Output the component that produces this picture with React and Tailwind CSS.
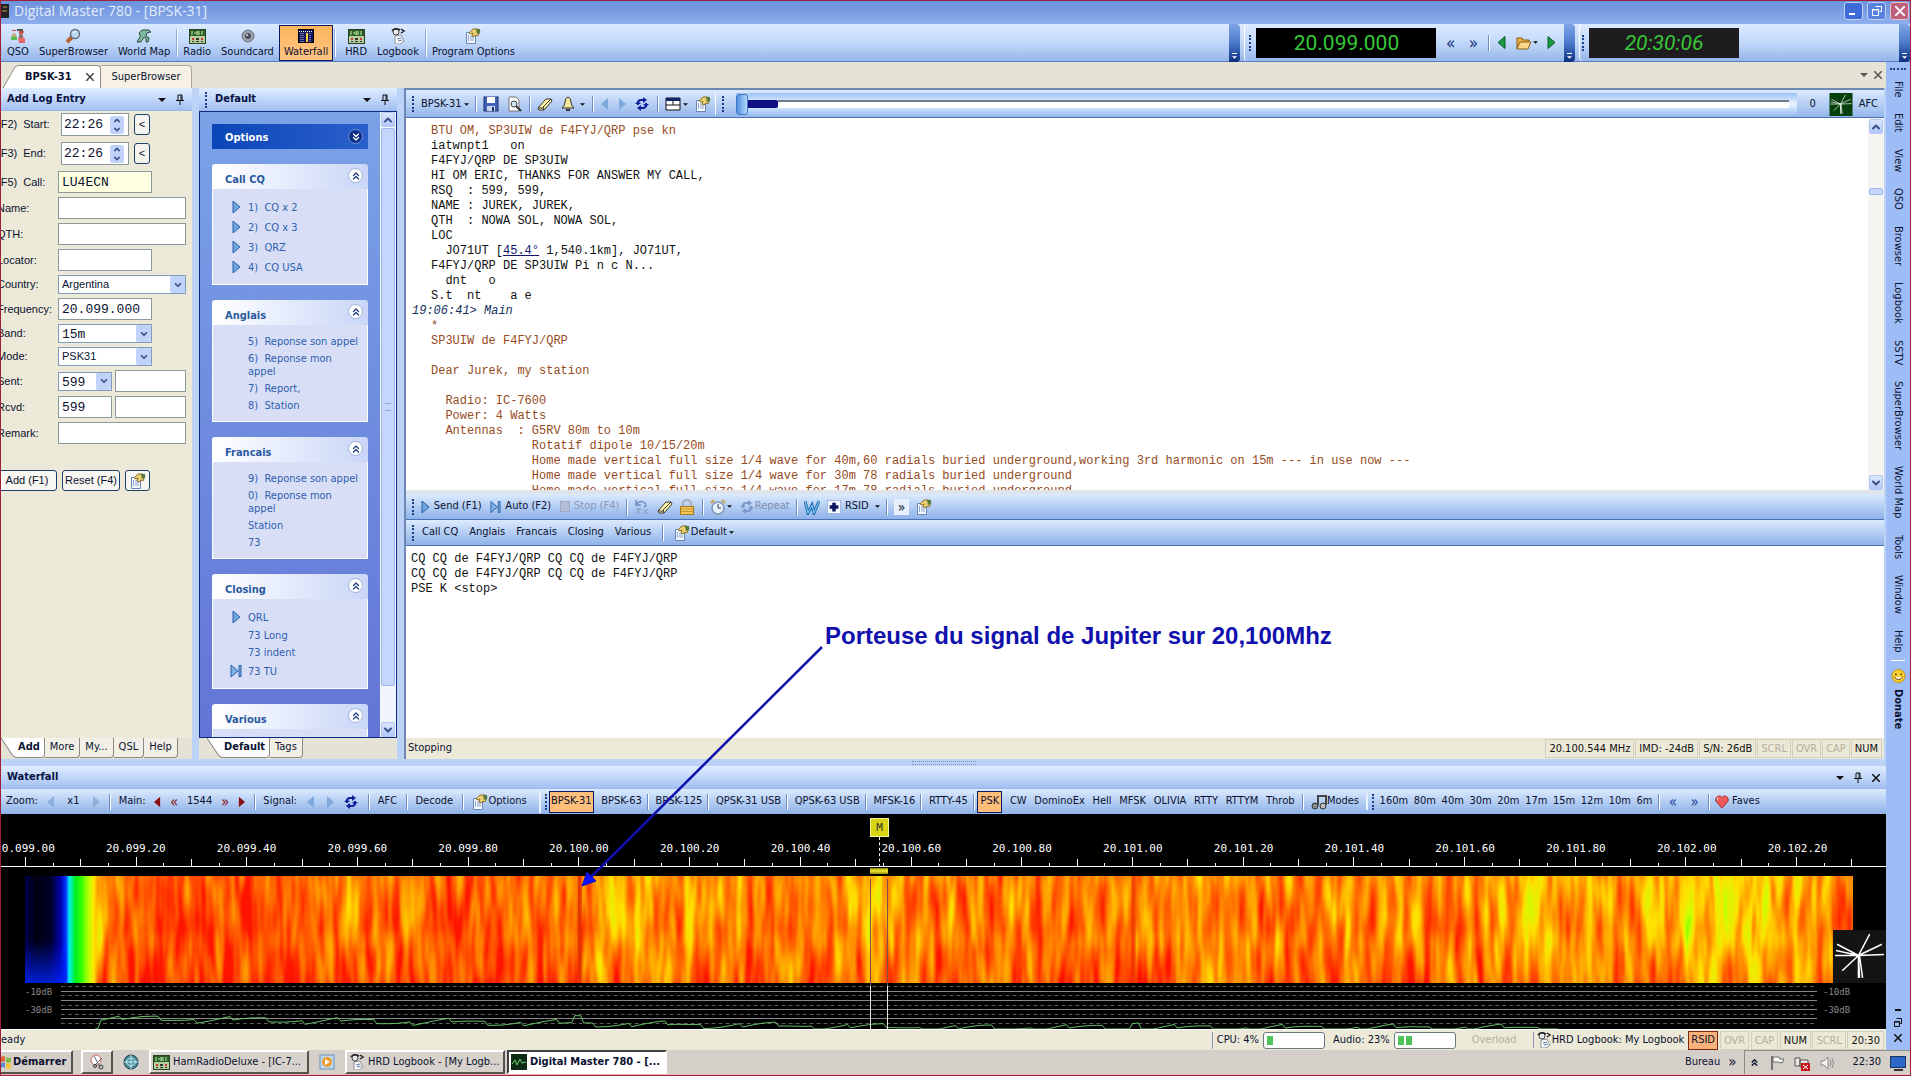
import { ChevronDown, ChevronUp, ChevronsDown, ChevronsUp } from "lucide-react";

const logLines = [
  { text: "BTU OM, SP3UIW de F4FYJ/QRP pse kn", sent: true },
  { text: "iatwnpt1   on" },
  { text: "F4FYJ/QRP DE SP3UIW" },
  { text: "HI OM ERIC, THANKS FOR ANSWER MY CALL," },
  { text: "RSQ  : 599, 599," },
  { text: "NAME : JUREK, JUREK," },
  { text: "QTH  : NOWA SOL, NOWA SOL," },
  { text: "LOC" },
  { text: "  JO71UT [", link: "45.4°", rest: " 1,540.1km], JO71UT," },
  { text: "F4FYJ/QRP DE SP3UIW Pi n c N..." },
  { text: "  dnt   o" },
  { text: "S.t  nt    a e" },
  { text: "19:06:41> Main", stamp: true },
  { text: "*", sent: true },
  { text: "SP3UIW de F4FYJ/QRP", sent: true },
  { text: " ", sent: true },
  { text: "Dear Jurek, my station", sent: true },
  { text: " ", sent: true },
  { text: "  Radio: IC-7600", sent: true },
  { text: "  Power: 4 Watts", sent: true },
  { text: "  Antennas  : G5RV 80m to 10m", sent: true },
  { text: "              Rotatif dipole 10/15/20m", sent: true },
  {
    text: "              Home made vertical full size 1/4 wave for 40m,60 radials buried underground,working 3rd harmonic on 15m --- in use now ---",
    sent: true,
  },
  {
    text: "              Home made vertical full size 1/4 wave for 30m 78 radials buried underground",
    sent: true,
  },
  {
    text: "              Home made vertical full size 1/4 wave for 17m 78 radials buried underground",
    sent: true,
  },
];

const macroGroups = [
  {
    title: "Call CQ",
    items: [
      { text: "1)  CQ x 2", icon: "play" },
      { text: "2)  CQ x 3", icon: "play" },
      { text: "3)  QRZ", icon: "play" },
      { text: "4)  CQ USA", icon: "play" },
    ],
  },
  {
    title: "Anglais",
    items: [
      { text: "5)  Reponse son appel" },
      { text: "6)  Reponse mon\nappel" },
      { text: "7)  Report," },
      { text: "8)  Station" },
    ],
  },
  {
    title: "Francais",
    items: [
      { text: "9)  Reponse son appel" },
      { text: "0)  Reponse mon\nappel" },
      { text: "Station" },
      { text: "73" },
    ],
  },
  {
    title: "Closing",
    items: [
      { text: "QRL", icon: "play" },
      { text: "73 Long" },
      { text: "73 indent" },
      { text: "73 TU", icon: "skip" },
    ],
  },
  { title: "Various", items: [] },
];

const menus = [
  "File", "Edit", "View", "QSO", "Browser", "Logbook", "SSTV",
  "SuperBrowser", "World Map", "Tools", "Window", "Help",
];

const bands = ["160m", "80m", "40m", "30m", "20m", "17m", "15m", "12m", "10m", "6m"];

const rulerLabels = [
  "20.099.00", "20.099.20", "20.099.40", "20.099.60", "20.099.80", "20.100.00",
  "20.100.20", "20.100.40", "20.100.60", "20.100.80", "20.101.00", "20.101.20",
  "20.101.40", "20.101.60", "20.101.80", "20.102.00", "20.102.20",
];

// signal level across the band, 0 = nothing, 1 = strong
const levels = [
  [0, 0.06], [0.03, 0.5], [0.036, 0.68], [0.042, 0.85], [0.06, 0.9], [0.1, 0.94],
  [0.15, 0.89], [0.19, 0.86], [0.22, 0.88], [0.25, 0.92], [0.3, 0.86],
  [0.33, 0.79], [0.36, 0.83], [0.42, 0.87], [0.46, 0.8], [0.52, 0.87],
  [0.6, 0.86], [0.66, 0.81], [0.7, 0.87], [0.75, 0.83], [0.79, 0.86],
  [0.83, 0.75], [0.87, 0.84], [0.93, 0.72], [0.97, 0.79], [1, 0.85],
];

function Svg({ className = "h-4 w-4", box = "0 0 16 16", children }) {
  return (
    <svg className={`shrink-0 ${className}`} viewBox={box} fill="none" aria-hidden="true">
      {children}
    </svg>
  );
}

function Tri({ dir = "right", fill = "#5d93cf", stroke = "none", className = "h-3 w-2" }) {
  return (
    <Svg className={className} box="0 0 8 12">
      <path d={dir === "right" ? "M1 0l7 6-7 6z" : "M7 0L0 6l7 6z"} fill={fill} stroke={stroke} />
    </Svg>
  );
}

function Caret({ className = "h-1 w-2" }) {
  return (
    <Svg className={className} box="0 0 8 4">
      <path d="M0 0h8L4 4z" fill="#111" />
    </Svg>
  );
}

function Pin() {
  return (
    <Svg className="h-3 w-3" box="0 0 12 12">
      <path d="M4 1v5M4 1h4M7 1v5M8 1v5M2 6.500h8M6 7v4" stroke="#111" />
    </Svg>
  );
}

function Cross({ color = "#111", className = "h-2 w-2" }) {
  return (
    <Svg className={className} box="0 0 8 8">
      <path d="M0 0l8 8M8 0L0 8" stroke={color} strokeWidth="1.500" />
    </Svg>
  );
}

function Skip({ className = "h-3 w-3" }) {
  return (
    <Svg className={className} box="0 0 12 12">
      <path d="M1 0l7 6-7 6zM9 0h2v12H9z" fill="#7db2e8" stroke="#2a5fa5" />
    </Svg>
  );
}

function OptionsIcon() {
  return (
    <Svg>
      <path d="M1.500 4.500h6l3 3v8h-9z" fill="#f4f8ff" stroke="#6a86b4" />
      <path d="M3 8h1M3 10h1M3 12h1" stroke="#2a56c0" />
      <path d="M5 8h3M5 10h4M5 12h4" stroke="#8aa4cc" />
      <path d="M4 5l4-4h5l2 2-2 5-2-1-2 2-2-1 1-3-2 1z" fill="#ecd070" stroke="#8a7030" />
      <path d="M11 1h4v4l-3 1z" fill="#5a7a3c" />
    </Svg>
  );
}

function RefreshIcon({ color = "#10209c" }) {
  return (
    <Svg>
      <path d="M4 9V7q0-3 3-3h2M12 7v2q0 3-3 3H7" stroke={color} strokeWidth="2" />
      <path d="M9 1l4 3-4 3z" fill={color} />
      <path d="M7 9l-4 3 4 3z" fill={color} />
      <path d="M1 8h6L4 5zM9 8h6l-3 3z" fill={color} />
    </Svg>
  );
}

function EraserIcon() {
  return (
    <Svg>
      <path d="M1 12L9 3h5l1 2-8 9H2z" fill="#fff6a8" stroke="#333" />
      <path d="M7 14l-1-3 8-8M1 12h5" stroke="#333" />
    </Svg>
  );
}

function RadioIcon() {
  return (
    <Svg className="h-[15px] w-[17px]" box="0 0 17 15">
      <rect x="0.500" y="0.500" width="16" height="14" fill="#b8d0a0" stroke="#27421f" />
      <rect x="1" y="1" width="15" height="6" fill="#2b5e2a" />
      <path d="M3 2v4M5 4h2M8 2v4M8 3h3M8 5h3M13 2v4" stroke="#c7f0a0" />
      <path d="M3 9h2v2H3zM12 9h2v2h-2z" fill="#c33" />
      <path d="M7 9h3v2H7zM3 12h2v1H3zM7 12h3v1H7zM12 12h2v1h-2z" fill="#333" />
    </Svg>
  );
}

function BookIcon() {
  return (
    <Svg>
      <path d="M5 8l6-1 3 6-4 3H5z" fill="#fafafa" stroke="#8a8f98" />
      <path d="M7 11l4-1M8 13l4-1" stroke="#5877a8" />
      <circle cx="6" cy="4" r="3" fill="#e8eaee" stroke="#444" />
      <path d="M2 3q3-4 8-1M11 1l3 2-3 2" stroke="#222" strokeWidth="1.500" />
    </Svg>
  );
}

function ScopeIcon({ className, fill }) {
  return (
    <Svg className={className} box="0 0 52 52">
      <rect width="52" height="52" fill={fill} />
      <path
        d="M25 25L36 4M25 25L48 14M25 25l25-1M25 25L4 14M25 25L3 20M25 25L2 25M25 25L9 40M25 25v22M26 25l3 22M25 25l1 22"
        stroke="#fff"
        strokeWidth="1.500"
      />
    </Svg>
  );
}

function Grip({ vertical = true }) {
  return (
    <span
      className={
        vertical
          ? "h-4 w-0 shrink-0 border-l-2 border-dotted border-[#1c3f8c]"
          : "h-0 w-4 border-t-2 border-dotted border-[#1c3f8c]"
      }
    />
  );
}

function Sep() {
  return <span className="h-4 w-px shrink-0 bg-[#6a8ccb] shadow-[1px_0_0_#fff]" />;
}

function TallSep() {
  return <span className="mx-px h-7 w-px shrink-0 bg-[#8aa9dc] shadow-[1px_0_0_#fff]" />;
}

function BigButton({ label, active, children }) {
  return (
    <button
      className={`flex h-9 flex-col items-center justify-center gap-px border px-1 pt-[2px] ${
        active
          ? "border-[#0a1a66] bg-linear-to-b from-[#fcb45e] to-[#ffc583]"
          : "border-transparent"
      }`}
    >
      {children}
      <span className="leading-[14px]">{label}</span>
    </button>
  );
}

function DockHeader({ title, grip, close }) {
  return (
    <div className="flex h-[23px] shrink-0 items-center gap-2 border-b border-[#9db8e8] bg-linear-to-b from-[#e0edff] to-[#a3c0f2] px-[6px] pt-px">
      {grip && <Grip />}
      <h2 className="flex-1 font-bold text-[#06123f]">{title}</h2>
      <button aria-label="Menu">
        <Caret />
      </button>
      <button aria-label="Pin">
        <Pin />
      </button>
      {close && (
        <button aria-label="Close">
          <Cross />
        </button>
      )}
    </div>
  );
}

function ScrollButton({ up }) {
  const Icon = up ? ChevronUp : ChevronDown;
  return (
    <button
      aria-label={up ? "Scroll up" : "Scroll down"}
      className="flex h-[15px] w-[14px] items-center justify-center rounded-[2px] border border-[#b4c8f6] bg-linear-to-b from-[#dbe6ff] to-[#b3c9fa]"
    >
      <Icon className="h-3 w-3 text-[#3a5187]" strokeWidth={4} />
    </button>
  );
}

function TextField({ id, label, value = "", wide, yellow }) {
  return (
    <div className="flex items-center">
      <FormLabel id={id} label={label} />
      <input
        id={id}
        defaultValue={value}
        className={`h-[22px] border border-[#8a9a9a] px-[3px] font-['Liberation_Mono',monospace] text-[13px] ${
          wide ? "w-32" : "w-[94px]"
        } ${yellow ? "bg-[#ffffe1]" : "bg-white"}`}
      />
    </div>
  );
}

function FormLabel({ id, label }) {
  return (
    <label htmlFor={id} className="w-[61px] shrink-0 whitespace-pre">
      {label}
    </label>
  );
}

function SelectBox({ id, value, width, mono }) {
  return (
    <div className={`relative ${width}`}>
      <select
        id={id}
        defaultValue={value}
        className={`block h-[19px] w-full appearance-none border border-[#7f9db9] bg-white px-[3px] ${
          mono ? "font-['Liberation_Mono',monospace] text-[13px]" : ""
        }`}
      >
        <option>{value}</option>
      </select>
      <span className="pointer-events-none absolute top-px right-px flex h-[17px] w-[15px] items-center justify-center rounded-[2px] bg-[#c1d3fb]">
        <ChevronDown className="h-[10px] w-[10px] text-[#3a5187]" strokeWidth={4} />
      </span>
    </div>
  );
}

function TimeField({ id, label }) {
  return (
    <div className="flex items-center pb-[2px]">
      <FormLabel id={id} label={label} />
      <div className="ml-[3px] flex h-[23px] w-[68px] items-center border border-[#8a9a9a] bg-white">
        <input
          id={id}
          defaultValue="22:26"
          className="w-12 pl-[2px] font-['Liberation_Mono',monospace] text-[13px]"
        />
        <span className="flex flex-col rounded-[2px] bg-[#c1d3fb]">
          <button aria-label={`${label} up`} className="px-[2px]">
            <ChevronUp className="h-[9px] w-[10px] text-[#3a5187]" strokeWidth={4} />
          </button>
          <button aria-label={`${label} down`} className="px-[2px]">
            <ChevronDown className="h-[9px] w-[10px] text-[#3a5187]" strokeWidth={4} />
          </button>
        </span>
      </div>
      <button className="ml-[5px] h-[21px] w-4 rounded-[3px] border border-[#1c3f6c] bg-[#f4f3ee]">
        &lt;
      </button>
    </div>
  );
}

function BottomTabs({ tabs }) {
  return (
    <div className="flex h-[21px] shrink-0 bg-[#e5e2d6]">
      <Svg className="h-5 w-4" box="0 0 16 20">
        <path d="M0 0h16v20H14z" fill="#fff" />
        <path d="M0 0l12 18q2 1.500 4 1.500" stroke="#777" />
      </Svg>
      {tabs.map((tab, i) => (
        <button
          key={tab}
          className={`h-5 rounded-br-sm border-r border-b border-[#8b8b84] ${
            i === 0 ? "bg-white pr-1 pl-px font-bold" : "bg-[#f1efe6] px-[5px]"
          }`}
        >
          {tab}
        </button>
      ))}
    </div>
  );
}

function LogEntryDock() {
  return (
    <section className="flex w-[191px] shrink-0 flex-col bg-[#ece9d8]">
      <DockHeader title="Add Log Entry" />
      <form
        className="-ml-1 flex flex-1 flex-col gap-1 pt-[2px] font-['Liberation_Sans',sans-serif] text-[11px]"
        onSubmit={(e) => e.preventDefault()}
      >
        <TimeField id="start" label="(F2)  Start:" />
        <TimeField id="end" label="(F3)  End:" />
        <TextField id="call" label="(F5)  Call:" value="LU4ECN" yellow />
        <TextField id="name" label="Name:" wide />
        <TextField id="qth" label="QTH:" wide />
        <TextField id="locator" label="Locator:" />
        <div className="flex items-center">
          <FormLabel id="country" label="Country:" />
          <SelectBox id="country" value="Argentina" width="w-32" />
        </div>
        <TextField id="frequency" label="Frequency:" value="20.099.000" />
        <div className="flex items-center">
          <FormLabel id="band" label="Band:" />
          <SelectBox id="band" value="15m" width="w-[94px]" mono />
        </div>
        <div className="flex items-center">
          <FormLabel id="mode" label="Mode:" />
          <SelectBox id="mode" value="PSK31" width="w-[94px]" />
        </div>
        <div className="flex items-center">
          <FormLabel id="sent" label="Sent:" />
          <SelectBox id="sent" value="599" width="w-[54px]" mono />
          <input aria-label="Sent exchange" className="ml-[3px] h-[22px] w-[71px] border border-[#8a9a9a] bg-white" />
        </div>
        <div className="flex items-center">
          <FormLabel id="rcvd" label="Rcvd:" />
          <input
            id="rcvd"
            defaultValue="599"
            className="h-[22px] w-[54px] border border-[#8a9a9a] bg-white px-[3px] font-['Liberation_Mono',monospace] text-[13px]"
          />
          <input aria-label="Received exchange" className="ml-[3px] h-[22px] w-[71px] border border-[#8a9a9a] bg-white" />
        </div>
        <TextField id="remark" label="Remark:" wide />
        <div className="mt-[22px] flex gap-[5px]">
          <button className="h-[21px] w-[60px] rounded-[3px] border border-[#1c3f6c] bg-[#f7f6f1]">Add (F1)</button>
          <button className="h-[21px] w-[58px] rounded-[3px] border border-[#1c3f6c] bg-[#f7f6f1]">Reset (F4)</button>
          <button
            aria-label="Log options"
            className="flex h-[21px] w-[25px] items-center justify-center rounded-[3px] border border-[#1c3f6c] bg-[#f7f6f1]"
          >
            <OptionsIcon />
          </button>
        </div>
      </form>
      <BottomTabs tabs={["Add", "More", "My...", "QSL", "Help"]} />
    </section>
  );
}

function MacroPanel({ group }) {
  return (
    <div>
      <button className="flex h-[25px] w-full items-start justify-between rounded-t-[3px] bg-linear-to-r from-white to-[#c9d6f7] pt-1 pr-[5px] pl-[13px]">
        <span className="pt-1 font-bold text-[#2a5a9e]">{group.title}</span>
        <span className="flex h-[15px] w-[15px] items-center justify-center rounded-full border border-[#9fb2d8] bg-white">
          <ChevronsUp className="h-3 w-3 text-[#1f3f7f]" strokeWidth={2.5} />
        </span>
      </button>
      <ul className="border border-t-0 border-white bg-[#d8def6] pt-2 pb-[7px] text-[#2f5fae]">
        {group.items.map((item) => (
          <li key={item.text} className={`flex items-center ${item.icon ? "h-5" : "py-[2px]"}`}>
            <span className="flex w-[35px] justify-center pl-[10px]">
              {item.icon === "play" && <Tri fill="#6ea6e0" stroke="#2a5fa5" />}
              {item.icon === "skip" && <Skip />}
            </span>
            <button className="text-left leading-[13px] whitespace-pre">{item.text}</button>
          </li>
        ))}
      </ul>
    </div>
  );
}

function MacroDock() {
  return (
    <section className="flex min-h-0 w-[198px] shrink-0 flex-col">
      <DockHeader title="Default" grip />
      <div className="flex min-h-0 flex-1 border border-[#0c2c84]">
        <div className="flex flex-1 flex-col gap-[15px] overflow-hidden bg-linear-to-b from-[#7ba2e7] to-[#6375d6] px-3 pt-3">
          <button className="flex h-[25px] shrink-0 items-center justify-between bg-linear-to-r from-[#0a46b8] to-[#2a5fcb] pr-[5px] pl-[13px]">
            <span className="pt-1 font-bold text-white">Options</span>
            <span className="flex h-[15px] w-[15px] items-center justify-center rounded-full border border-[#6f93dd] bg-[#0b2f86]">
              <ChevronsDown className="h-3 w-3 text-white" strokeWidth={2.5} />
            </span>
          </button>
          {macroGroups.map((group) => (
            <MacroPanel key={group.title} group={group} />
          ))}
        </div>
        <div className="flex w-4 flex-col items-center bg-[#f3f5fd]">
          <ScrollButton up />
          <div className="mt-px flex w-[14px] flex-1 flex-col items-center justify-center rounded-[2px] border border-[#9db7ee] bg-[#c5d6fc]">
            <span className="h-2 w-[6px] border-y border-[#8fa9e0]" />
          </div>
          <div className="h-9" />
          <ScrollButton />
        </div>
      </div>
      <div className="bg-[#e5e2d6] pl-2">
        <BottomTabs tabs={["Default", "Tags"]} />
      </div>
    </section>
  );
}

function LogToolbar() {
  return (
    <div className="flex h-7 shrink-0 items-center border-b border-[#4a71b5] bg-linear-to-b from-[#dceafe] to-[#94b6ea] pt-px">
      <div className="flex w-[309px] shrink-0 items-center justify-between pr-1 pl-[6px]">
        <Grip />
        <button className="flex items-center gap-[2px]">
          BPSK-31 <Caret className="h-[3px] w-[5px]" />
        </button>
        <Sep />
        <button aria-label="Save">
          <Svg>
            <rect x="1" y="1" width="14" height="14" fill="#3f63b8" stroke="#1e2f6c" />
            <path d="M4 1h8v6H4z" fill="#fff" />
            <path d="M4 10h8v5H4z" fill="#c9d4ea" />
            <path d="M9 11h2v4H9z" fill="#1e2f6c" />
          </Svg>
        </button>
        <button aria-label="Preview">
          <Svg>
            <path d="M3 1h7l3 3v11H3z" fill="#fff" stroke="#777" />
            <circle cx="8" cy="8" r="3" fill="#cfe6f6" stroke="#444" />
            <path d="M10 10l5 5" stroke="#333" strokeWidth="2" />
          </Svg>
        </button>
        <Sep />
        <button aria-label="Clear">
          <EraserIcon />
        </button>
        <button aria-label="Alarm" className="flex items-center gap-1">
          <Svg>
            <path d="M2 12q3-2 3-6 0-4 3-5 3 1 3 5 0 4 3 6z" fill="#f6e79a" stroke="#333" />
            <path d="M6 14h4" stroke="#333" strokeWidth="2" />
          </Svg>
          <Caret className="h-[3px] w-[5px]" />
        </button>
        <Sep />
        <button aria-label="Previous">
          <Tri dir="left" fill="#7fa9dc" className="h-3 w-[10px]" />
        </button>
        <button aria-label="Next">
          <Tri fill="#7fa9dc" className="h-3 w-[10px]" />
        </button>
        <button aria-label="Refresh">
          <RefreshIcon />
        </button>
        <Sep />
        <button aria-label="Layout" className="flex items-center gap-[2px]">
          <Svg>
            <path d="M1 2h14v12H1z" fill="#fff" stroke="#111" />
            <path d="M1 2h14v3H1z" fill="#13206b" />
            <path d="M1 9h14M8 5v4" stroke="#111" />
          </Svg>
          <Caret className="h-[3px] w-[5px]" />
        </button>
        <button aria-label="Display options">
          <OptionsIcon />
        </button>
      </div>
      <div className="flex flex-1 items-center gap-3 border-l border-white pl-[6px]">
        <Grip />
        <div className="flex h-[22px] flex-1 items-center bg-linear-to-b from-[#9cc2f5] via-[#eaf3ff] to-[#9cc2f5] pr-2">
          <span className="h-[21px] w-3 rounded-[3px] border border-[#3d78c4] bg-linear-to-r from-[#4a8fe0] to-[#b5d6fb]" />
          <span className="h-2 w-[30px] rounded-r-[2px] bg-[#120f86]" />
          <span className="h-2 flex-1 border-t-2 border-[#6f7c8c] bg-white" />
        </div>
      </div>
      <span className="w-8 text-center">0</span>
      <ScopeIcon className="h-[23px] w-6" fill="#07400d" />
      <button className="px-[6px]">AFC</button>
    </div>
  );
}

function ReceivePane() {
  return (
    <div className="flex min-h-0 flex-1 bg-white">
      <div className="flex-1 overflow-hidden pt-[6px] pl-[6px] font-['Liberation_Mono',monospace] text-[12px] leading-[15px]">
        {logLines.map((line, i) => (
          <p
            key={i}
            className={`whitespace-pre ${
              line.stamp
                ? "text-[#12305c] italic"
                : line.sent
                  ? "pl-[19px] text-[#964b1e]"
                  : "pl-[19px] text-[#111]"
            }`}
          >
            {line.text}
            {line.link && (
              <a href="#bearing" className="text-[#10106c] underline">
                {line.link}
              </a>
            )}
            {line.rest}
          </p>
        ))}
      </div>
      <div className="flex w-4 flex-col items-center bg-[#f5f4f0] pt-px">
        <ScrollButton up />
        <div className="flex-[54]" />
        <div className="h-[7px] w-[14px] rounded-[2px] border border-[#9db7ee] bg-[#c5d6fc]" />
        <div className="flex-[280]" />
        <ScrollButton />
      </div>
    </div>
  );
}

function SendToolbars() {
  return (
    <div className="shrink-0 border-t-4 border-[#dfe3ea]">
      <div className="flex h-[26px] items-center border-b border-[#4a71b5] bg-linear-to-b from-[#dceafe] to-[#8eb2e8]">
        <div className="flex w-[526px] items-center justify-between pl-[6px]">
          <Grip />
          <button className="flex items-center gap-[5px]">
            <Tri fill="#6ea6e0" stroke="#2a5fa5" /> Send (F1)
          </button>
          <button className="flex items-center gap-1 pl-[2px]">
            <Skip className="h-3 w-[11px]" /> Auto (F2)
          </button>
          <button className="flex items-center gap-1 pl-[2px] text-[#8c9ab5]">
            <span className="h-[11px] w-[10px] border border-[#9ea9c6] bg-[#b6bfd8]" /> Stop (F4)
          </button>
          <Sep />
          <button aria-label="Undo transmit">
            <Svg>
              <path d="M2 1v5h5M2 6q4-6 9-2 2 3-1 4" stroke="#6d8fc6" strokeWidth="1.500" />
              <path d="M2 10h5M4.500 10v5M9 10l5 5M14 10l-5 5" stroke="#7f93b8" />
            </Svg>
          </button>
          <button aria-label="Clear text">
            <EraserIcon />
          </button>
          <button aria-label="Lock">
            <Svg>
              <path d="M4 8V5q0-4 4-4t4 4v3" stroke="#a9aeb8" strokeWidth="2" />
              <rect x="1.500" y="7.500" width="13" height="8" fill="#f3c75a" stroke="#a87a1c" />
              <path d="M2 10h12M2 12.500h12" stroke="#c9962c" />
            </Svg>
          </button>
          <Sep />
          <button aria-label="Timer" className="flex items-center gap-px">
            <Svg>
              <circle cx="8" cy="9" r="6" fill="#e8f0fa" stroke="#7d93b5" strokeWidth="1.500" />
              <path d="M8 5v4h3" stroke="#345" />
              <path d="M1 4l3-3M15 4l-3-3" stroke="#c8a24a" strokeWidth="2" />
            </Svg>
            <Caret className="h-[3px] w-[5px]" />
          </button>
          <button className="flex items-center text-[#7f8fb0]">
            <RefreshIcon color="#7a98c8" /> Repeat
          </button>
          <Sep />
          <button aria-label="Word list">
            <Svg>
              <path d="M1 2l3 12 4-8 2 8 5-12" stroke="#1f6fb5" strokeWidth="3" />
              <path d="M1 2l3 12 4-8 2 8 5-12" stroke="#8fd0ef" />
            </Svg>
          </button>
          <button className="flex items-center gap-1">
            <Svg className="h-[14px] w-[14px]">
              <rect x="0.500" y="0.500" width="15" height="15" fill="#f5f8ff" stroke="#9fb4dd" />
              <path d="M8 3v10M3 8h10" stroke="#0b1560" strokeWidth="4" />
            </Svg>
            RSID
            <Caret className="ml-[2px] h-[3px] w-[5px]" />
          </button>
          <Sep />
          <button className="w-[15px] bg-[#e8f0fd] text-[14px] leading-4">»</button>
          <button aria-label="Send options">
            <OptionsIcon />
          </button>
        </div>
      </div>
      <div className="flex h-[26px] items-center border-b border-[#4a71b5] bg-linear-to-b from-[#dceafe] to-[#8eb2e8]">
        <div className="flex w-[328px] items-center justify-between pl-[6px]">
          <span className="flex items-center gap-2">
            <Grip />
            <button>Call CQ</button>
          </span>
          {["Anglais", "Francais", "Closing", "Various"].map((name) => (
            <button key={name}>{name}</button>
          ))}
          <Sep />
          <button className="flex items-center gap-px">
            <OptionsIcon /> Default <Caret className="ml-px h-[3px] w-[5px]" />
          </button>
        </div>
      </div>
    </div>
  );
}

function StatusCell({ children, dim }) {
  return (
    <span className={`border border-[#d3cfbd] px-[3px] leading-[17px] ${dim ? "text-[#b5b09c]" : "text-[#111]"}`}>
      {children}
    </span>
  );
}

function Terminal() {
  return (
    <main className="flex min-w-0 flex-1 flex-col border-t-2 border-l-2 border-[#6f87b3]">
      <LogToolbar />
      <ReceivePane />
      <SendToolbars />
      <textarea
        aria-label="Transmit text"
        className="h-48 shrink-0 resize-none bg-white pt-[6px] pl-[5px] font-['Liberation_Mono',monospace] text-[12px] leading-[15px] text-[#111] outline-none"
        defaultValue={
          "CQ CQ de F4FYJ/QRP CQ CQ de F4FYJ/QRP\nCQ CQ de F4FYJ/QRP CQ CQ de F4FYJ/QRP\nPSE K <stop>"
        }
      />
      <div className="flex h-[21px] shrink-0 items-center gap-px bg-[#ece9d8] px-[2px]">
        <span className="flex-1">Stopping</span>
        <StatusCell>20.100.544 MHz</StatusCell>
        <StatusCell>IMD: -24dB</StatusCell>
        <StatusCell>S/N: 26dB</StatusCell>
        <StatusCell dim>SCRL</StatusCell>
        <StatusCell dim>OVR</StatusCell>
        <StatusCell dim>CAP</StatusCell>
        <StatusCell>NUM</StatusCell>
      </div>
    </main>
  );
}

function WaterfallToolbar() {
  const favs = ["BPSK-63", "BPSK-125", "QPSK-31 USB", "QPSK-63 USB", "MFSK-16", "RTTY-45"];
  const modes = ["CW", "DominoEx", "Hell", "MFSK", "OLIVIA", "RTTY", "RTTYM", "Throb"];
  return (
    <div className="flex h-[25px] shrink-0 items-center bg-linear-to-b from-[#dceafe] to-[#8eb2e8]">
      <div className="flex w-[538px] shrink-0 items-center justify-between pr-3 pl-[5px]">
        <span>Zoom:</span>
        <button aria-label="Zoom out"><Tri dir="left" fill="#8fb0dc" /></button>
        <span className="px-1">x1</span>
        <button aria-label="Zoom in"><Tri fill="#8fb0dc" /></button>
        <Sep />
        <span>Main:</span>
        <button aria-label="Main down"><Tri dir="left" fill="#8c0f16" className="h-3 w-[7px]" /></button>
        <button className="text-[15px] leading-4 text-[#8c0f16]">«</button>
        <span>1544</span>
        <button className="text-[15px] leading-4 text-[#8c0f16]">»</button>
        <button aria-label="Main up"><Tri fill="#8c0f16" className="h-3 w-[7px]" /></button>
        <Sep />
        <span>Signal:</span>
        <button aria-label="Signal down"><Tri dir="left" fill="#7fa9dc" className="h-3 w-[10px]" /></button>
        <button aria-label="Signal up"><Tri fill="#7fa9dc" className="h-3 w-[10px]" /></button>
        <button aria-label="Retune"><RefreshIcon /></button>
        <Sep />
        <button>AFC</button>
        <Sep />
        <button>Decode</button>
        <Sep />
        <button className="flex items-center gap-px">
          <OptionsIcon /> Options
        </button>
      </div>
      <div className="flex w-[827px] shrink-0 items-center justify-between border-l-2 border-[#e8f1ff] pr-[7px] pl-1">
        <span className="flex items-center gap-[2px]">
          <Grip />
          <button className="h-[22px] border border-[#0a1a66] bg-[#ffbf7a] px-px">BPSK-31</button>
        </span>
        {favs.map((name) => (
          <span key={name} className="flex items-center gap-[5px]">
            <button>{name}</button>
            <Sep />
          </span>
        ))}
        <button className="-ml-1 h-[22px] border border-[#0a1a66] bg-[#ffbf7a] px-[2px]">PSK</button>
        {modes.map((name) => (
          <button key={name}>{name}</button>
        ))}
        <Sep />
        <button className="flex items-center">
          <Svg>
            <path d="M7 11V2h8v9" stroke="#444" strokeWidth="2" />
            <circle cx="4" cy="12" r="3" fill="#888" stroke="#333" />
            <circle cx="12" cy="12" r="3" fill="#bbb" stroke="#333" />
          </Svg>
          Modes
        </button>
      </div>
      <div className="flex w-[394px] shrink-0 items-center justify-between border-l-2 border-[#e8f1ff] pl-1">
        <Grip />
        {bands.map((band) => (
          <button key={band}>{band}</button>
        ))}
        <Sep />
        <button className="px-1 text-[15px] leading-4 text-[#1c3f9c]">«</button>
        <button className="px-1 text-[15px] leading-4 text-[#1c3f9c]">»</button>
        <Sep />
        <button className="flex items-center gap-[3px]">
          <Svg className="h-[14px] w-[14px]">
            <path d="M8 15L1 7q-1-5 4-6 2 0 3 2 1-2 3-2 5 1 4 6z" fill="#ee5a5a" stroke="#9c2020" />
            <path d="M4 3q-2 1-1 3" stroke="#fff" />
          </Svg>
          Faves
        </button>
      </div>
    </div>
  );
}

function Spectrogram() {
  return (
    <svg className="block h-[107px] w-full" viewBox="0 0 1829 107" preserveAspectRatio="none" role="img" aria-label="Waterfall">
      <defs>
        <linearGradient id="level">
          {levels.map(([offset, v]) => {
            const g = Math.round(v * 255);
            return <stop key={offset} offset={offset} stopColor={`rgb(${g},${g},${g})`} />;
          })}
        </linearGradient>
        <linearGradient id="fade" x2="0" y2="1">
          <stop offset="0" stopColor="#000" stopOpacity="0.03" />
          <stop offset="0.5" stopColor="#000" stopOpacity="0" />
          <stop offset="0.7" stopColor="#fff" stopOpacity="0.06" />
          <stop offset="1" stopColor="#fff" stopOpacity="0.2" />
        </linearGradient>
        <linearGradient id="edge">
          <stop offset="0" stopColor="#00004a" />
          <stop offset="0.15" stopColor="#000012" />
          <stop offset="0.35" stopColor="#00002a" />
          <stop offset="0.48" stopColor="#0000a8" />
          <stop offset="0.55" stopColor="#0030ff" />
          <stop offset="0.6" stopColor="#00f0f0" />
          <stop offset="0.68" stopColor="#00f020" />
          <stop offset="0.76" stopColor="#30ff00" />
          <stop offset="0.86" stopColor="#b8ff00" />
          <stop offset="0.93" stopColor="#ffe800" />
          <stop offset="1" stopColor="#ffb000" stopOpacity="0" />
        </linearGradient>
        <linearGradient id="floor" x2="0" y2="1">
          <stop offset="0.6" stopColor="#0018ff" stopOpacity="0" />
          <stop offset="1" stopColor="#0028ff" stopOpacity="0.8" />
        </linearGradient>
        <filter id="heat" x="0" y="0" width="1" height="1" colorInterpolationFilters="sRGB">
          <feTurbulence type="fractalNoise" baseFrequency="0.1 0.014" numOctaves="2" seed="12" />
          <feColorMatrix values="0.7 0.3 0 0 0  0.7 0.3 0 0 0  0.7 0.3 0 0 0  0 0 0 0 1" result="noise" />
          <feComposite in="SourceGraphic" in2="noise" operator="arithmetic" k1="0" k2="1" k3="0.62" k4="-0.31" />
          <feComponentTransfer>
            <feFuncR type="table" tableValues="0 0 0 0 0 .2 .8 1 1 1 1" />
            <feFuncG type="table" tableValues="0 0 0 .6 1 1 1 .88 .6 .34 .08" />
            <feFuncB type="table" tableValues="0 .35 .95 1 .5 0 0 0 0 0 0" />
            <feFuncA type="linear" slope="0" intercept="1" />
          </feComponentTransfer>
        </filter>
      </defs>
      <g filter="url(#heat)">
        <rect width="1829" height="107" fill="url(#level)" />
        <rect width="1829" height="107" fill="url(#fade)" />
      </g>
      <rect x="553" width="4" height="107" fill="#e02800" fillOpacity="0.8" />
      <rect x="1107" width="4" height="107" fill="#f03000" fillOpacity="0.7" />
      <rect width="74" height="107" fill="url(#edge)" />
      <rect width="42" height="107" fill="url(#floor)" />
    </svg>
  );
}

// green trace under the waterfall, sinks out of view towards the right
function tracePoints() {
  const points = [];
  for (let x = 34; x <= 1500; x += 3) {
    const jitter = ((x * 7919) % 97) / 97;
    let y = 33 + Math.min(x, 900) * 0.011 + jitter * 4 + Math.sin(x * 0.06) * 2;
    if (x < 40) y += 8;
    if (Math.abs(x - 518) < 5) y -= 7;
    if (Math.abs(x - 1074) < 5) y -= 5;
    points.push(`${x},${Math.min(y, 46).toFixed(1)}`);
  }
  return points.join(" ");
}

function Waterfall() {
  return (
    <section className="shrink-0">
      <DockHeader title="Waterfall" close />
      <WaterfallToolbar />
      <div className="relative overflow-hidden bg-black font-['DejaVu_Sans_Mono',monospace]">
        <div className="pr-[33px] pl-6">
          <div className="flex pt-7">
            <div className="flex flex-[32] justify-between">
              {rulerLabels.map((label) => (
                <span key={label} className="flex w-0 justify-center text-[11px] leading-[14px] text-white">
                  {label}
                </span>
              ))}
            </div>
            <div className="flex-1" />
          </div>
          <div className="mt-px flex h-[9px] items-end justify-between">
            {Array.from({ length: 67 }, (_, i) => (
              <span
                key={i}
                className={`w-px bg-white ${i % 4 === 0 ? "h-[9px]" : i % 2 === 0 ? "h-[7px]" : "h-[3px]"}`}
              />
            ))}
          </div>
        </div>
        <div className="mb-[9px] h-px bg-white" />
        <div className="pr-[33px] pl-6">
          <Spectrogram />
        </div>
        <div className="flex h-[46px] pr-[33px] pl-6 text-[9px] leading-[18px] text-[#8a8a8a]">
          <div className="w-9">
            <p>-10dB</p>
            <p>-30dB</p>
          </div>
          <svg className="h-[46px] flex-1" viewBox="0 0 1757 46" preserveAspectRatio="none" aria-hidden="true">
            {[9, 18, 27, 36].map((y) => (
              <path key={y} d={`M0 ${y - 0.5}H1757`} stroke="#8b8b8b" />
            ))}
            {[4, 13, 23, 32, 41].map((y) => (
              <path key={y} d={`M0 ${y - 0.5}H1757`} stroke="#5c5c5c" strokeDasharray="4 3" />
            ))}
            <polyline points={tracePoints()} fill="none" stroke="#6cc86c" />
          </svg>
          <div className="w-9 pl-[6px]">
            <p>-10dB</p>
            <p>-30dB</p>
          </div>
        </div>

        {/* main cursor */}
        <div className="absolute top-1 bottom-0 left-[46.1%] flex w-[19px] flex-col items-center">
          <span className="h-[19px] w-[19px] border border-[#f5f3a0] bg-[#d8d414] text-center text-[11px] leading-[17px] text-[#333]">
            M
          </span>
          <span className="h-[30px] border-l border-dashed border-white" />
          <span className="my-px h-[6px] w-[18px] bg-linear-to-b from-[#8f8a08] via-[#f0ea30] to-[#8f8a08]" />
          <span className="mt-1 h-[107px] w-[18px] border-x border-[#7c5048]" />
          <span className="w-[18px] flex-1 border-x border-[#e8e8e8]" />
        </div>
        <div className="absolute right-0 bottom-[46px]">
          <ScopeIcon className="block h-[53px] w-[53px]" fill="#141414" />
        </div>
      </div>
    </section>
  );
}

function Meter({ bars }) {
  return (
    <span className="flex h-[17px] w-[62px] gap-[2px] rounded-[3px] border border-[#6b7a80] bg-white p-[3px]">
      {Array.from({ length: bars }, (_, i) => (
        <span key={i} className="w-[6px] bg-[#4fc25a]" />
      ))}
    </span>
  );
}

function StatusBar() {
  return (
    <footer className="flex h-[21px] shrink-0 items-center border-t border-white bg-[#ece9d8] pr-[2px]">
      <span className="flex-1">eady</span>
      <div className="flex items-center gap-1 border-l border-[#8a9ab0] pl-1">
        CPU: 4% <Meter bars={1} />
        <span className="pl-1">Audio: 23%</span> <Meter bars={2} />
      </div>
      <span className="w-[77px] text-center text-[#b5b09c]">Overload</span>
      <span className="flex items-center border-l border-[#8a9ab0] pl-[2px]">
        <BookIcon /> HRD Logbook: My Logbook
      </span>
      <button className="ml-1 h-[19px] border border-[#7a2a10] bg-[#f9b27c] px-[2px]">RSID</button>
      <div className="flex w-[166px] items-center justify-between pl-[2px]">
        <StatusCell dim>OVR</StatusCell>
        <StatusCell dim>CAP</StatusCell>
        <StatusCell>NUM</StatusCell>
        <StatusCell dim>SCRL</StatusCell>
        <StatusCell>20:30</StatusCell>
      </div>
    </footer>
  );
}

function SideMenu() {
  return (
    <nav className="flex w-6 shrink-0 flex-col items-center bg-[#9ebcf5] pt-[6px] pb-2">
      <Grip vertical={false} />
      <div className="mt-[11px] flex flex-col items-center gap-4">
        {menus.map((menu) => (
          <button key={menu} className="leading-4 [writing-mode:vertical-rl]">
            {menu}
          </button>
        ))}
      </div>
      <span className="my-2 h-px w-[14px] bg-white" />
      <Svg className="h-[14px] w-[15px]">
        <circle cx="8" cy="8" r="7.500" fill="#fbd02c" stroke="#b98a10" />
        <path d="M5 5v2M11 5v2" stroke="#402c00" strokeWidth="1.500" />
        <path d="M3 9q5 6 10 0" fill="#fff" stroke="#402c00" />
      </Svg>
      <button className="mt-[6px] leading-4 font-bold [writing-mode:vertical-rl]">Donate</button>
      <div className="mt-auto flex flex-col items-center gap-[7px]">
        <span className="h-[2px] w-[6px] bg-[#111]" />
        <Svg className="h-[9px] w-2" box="0 0 8 9">
          <path d="M2.500 0.500h5v5h-2M0.500 3.500h5v5h-5zM0 4h6" stroke="#111" />
        </Svg>
        <Cross />
      </div>
    </nav>
  );
}

function EndCap() {
  return (
    <span className="flex h-[38px] w-[11px] shrink-0 flex-col items-center justify-end rounded-r-sm bg-linear-to-b from-[#7fa5e6] via-[#4c79cb] to-[#0c2f80] pb-[3px]">
      <span className="mb-[2px] h-px w-[5px] bg-white" />
      <Svg className="h-[3px] w-[5px]" box="0 0 8 4">
        <path d="M0 0h8L4 4z" fill="#fff" />
      </Svg>
    </span>
  );
}

function TopToolbar() {
  return (
    <div className="flex h-[38px] shrink-0 border-b border-[#5a7fc0] bg-linear-to-b from-[#dceafe] via-[#c3d9fa] to-[#95b6ea]">
      <div className="flex flex-1 items-center pl-px">
        <BigButton label="QSO">
          <Svg>
            <path d="M2 2q3-1 5 1H2zM9 3h5l-1 3H9z" fill="#c8524c" />
            <path d="M7 1h6v2H7z" fill="#4a5a50" />
            <path d="M1 9q3-4 6 0v3H1z" fill="#58bd54" />
            <path d="M8 10q4-3 7 1v4H9z" fill="#e46a68" />
            <circle cx="4" cy="7" r="2" fill="#c9a48a" />
            <circle cx="11" cy="8" r="2" fill="#8a6a5a" />
          </Svg>
        </BigButton>
        <BigButton label="SuperBrowser">
          <Svg>
            <path d="M2 14l5-5" stroke="#b5652c" strokeWidth="4" />
            <circle cx="10" cy="6" r="4.500" fill="#bcd8f2" stroke="#66707c" strokeWidth="1.500" />
            <path d="M8 5q1-2 3-1" stroke="#fff" />
          </Svg>
        </BigButton>
        <BigButton label="World Map">
          <Svg>
            <path d="M3 5l3-3h7l2 2-4 1-1 3 3 2-1 4h-2v-4l-2-1-3 5H1l3-5V7z" fill="#7fb8a0" stroke="#2f4d42" />
          </Svg>
        </BigButton>
        <TallSep />
        <BigButton label="Radio"><RadioIcon /></BigButton>
        <BigButton label="Soundcard">
          <Svg>
            <circle cx="8" cy="8" r="6" fill="#9aa0ac" stroke="#6c707a" />
            <circle cx="8" cy="8" r="3" fill="#4c505a" />
            <circle cx="7" cy="7" r="1" fill="#ddd" />
          </Svg>
        </BigButton>
        <BigButton label="Waterfall" active>
          <Svg>
            <rect x="0.500" y="1.500" width="15" height="13" fill="#12145c" stroke="#000" />
            <path d="M1 3.500h14" stroke="#fff" strokeDasharray="1 1" />
            <path d="M3 5v9M5 5v9M12 5v9" stroke="#c8c8f4" strokeDasharray="1 1" />
            <path d="M9 5v9" stroke="#ffce3a" strokeWidth="2" />
          </Svg>
        </BigButton>
        <TallSep />
        <span className="w-1" />
        <BigButton label="HRD"><RadioIcon /></BigButton>
        <BigButton label="Logbook"><BookIcon /></BigButton>
        <TallSep />
        <BigButton label="Program Options"><OptionsIcon /></BigButton>
      </div>
      <EndCap />
      <div className="ml-1 flex w-[320px] shrink-0 items-center justify-between rounded-l-sm border-l border-white pr-[5px] pl-1">
        <Grip />
        <span className="h-[30px] w-[180px] bg-black text-center font-[Roboto,sans-serif] text-[21px] leading-[31px] text-[#37c837]">
          20.099.000
        </span>
        <button className="px-1 text-[17px] leading-4 text-[#17357f]">«</button>
        <button className="px-1 text-[17px] leading-4 text-[#17357f]">»</button>
        <Sep />
        <button aria-label="Previous favourite" className="px-1">
          <Tri dir="left" fill="#1b9a44" stroke="#0c5a25" className="h-[13px] w-2" />
        </button>
        <button aria-label="Favourites" className="flex items-center gap-px">
          <Svg>
            <path d="M1 14V3h5l1 2h6v3" fill="#e9b04a" stroke="#8a5c12" />
            <path d="M1 14l3-7h11l-3 7z" fill="#fbd88a" stroke="#8a5c12" />
          </Svg>
          <Caret className="h-[3px] w-[5px]" />
        </button>
        <button aria-label="Next favourite" className="px-1">
          <Tri fill="#1b9a44" stroke="#0c5a25" className="h-[13px] w-2" />
        </button>
      </div>
      <EndCap />
      <div className="ml-1 flex w-[320px] shrink-0 items-center gap-[5px] rounded-l-sm border-l border-white pl-[2px]">
        <Grip />
        <span className="h-[30px] w-[150px] bg-[#1e1c1e] text-center font-[Roboto,sans-serif] text-[21px] leading-[31px] text-[#37c837] italic">
          20:30:06
        </span>
      </div>
      <EndCap />
    </div>
  );
}

function TitleBar() {
  return (
    <header className="flex h-[23px] shrink-0 items-center bg-linear-to-b from-[#6d93dd] via-[#7b9de4] to-[#8fb0ee] pb-[3px] text-[#e3edfb]">
      <Svg className="h-[14px] w-2" box="0 0 8 14">
        <path d="M0 0h8v14H0z" fill="#222" />
        <path d="M2 3h4M1 7h5" stroke="#c9a24a" />
      </Svg>
      <h1 className="flex-1 pl-[5px] font-['Open_Sans',sans-serif] text-[14px] leading-5">Digital Master 780 - [BPSK-31]</h1>
      <div className="flex gap-1 pr-px">
        <button aria-label="Minimize" className="flex h-[18px] w-[19px] items-end rounded-[3px] border border-[#c3d3f6] bg-[#3f6bd8] p-1">
          <span className="h-[2px] w-[6px] bg-white" />
        </button>
        <button aria-label="Restore" className="flex h-[18px] w-[19px] items-center justify-center rounded-[3px] border border-[#c3d3f6] bg-[#5a82df]">
          <Svg className="h-[10px] w-[10px]" box="0 0 10 10">
            <path d="M3.500 0.500h6v5h-2M0.500 3.500h6v6h-6zM0 4h7" stroke="#fff" />
          </Svg>
        </button>
        <button aria-label="Close" className="flex h-[18px] w-[19px] items-center justify-center rounded-[3px] border border-[#e2c3d0] bg-[#c0607c]">
          <Cross color="#fff" className="h-[10px] w-[10px]" />
        </button>
      </div>
    </header>
  );
}

function DocTabs() {
  return (
    <div className="flex h-[26px] shrink-0 items-end bg-[#e5e2d6] pl-[2px]">
      <Svg className="h-[23px] w-4" box="0 0 16 23">
        <path d="M0 23L12 2q2-2 4-2v23z" fill="#fff" />
        <path d="M0 23L12 2q2-1.500 4-1.500" stroke="#8f8f88" />
      </Svg>
      <div className="flex h-[23px] w-[82px] items-center justify-between rounded-tr-sm border-t border-r border-[#8f8f88] bg-white px-[6px]">
        <button className="font-bold">BPSK-31</button>
        <button aria-label="Close tab">
          <Cross color="#444" />
        </button>
      </div>
      <button className="h-[23px] w-[91px] rounded-tr-sm border-t border-r border-[#aaa698] bg-[#f6f1e4]">SuperBrowser</button>
      <div className="ml-auto flex h-full items-center gap-[6px] pr-1">
        <Svg className="h-1 w-2" box="0 0 8 4">
          <path d="M0 0h8L4 4z" fill="#555" />
        </Svg>
        <Cross color="#555" />
      </div>
    </div>
  );
}

function TaskButton({ icon, label, active }) {
  return (
    <button
      className={`flex h-6 w-40 items-center gap-[3px] border-2 pl-[2px] ${
        active
          ? "border-t-[#404040] border-r-white border-b-white border-l-[#404040] bg-white font-bold"
          : "border-t-white border-r-[#55524c] border-b-[#55524c] border-l-white bg-[#d8d2cc]"
      }`}
    >
      {icon}
      <span>{label}</span>
    </button>
  );
}

function Taskbar() {
  return (
    <div className="flex h-[25px] shrink-0 items-end border-b border-[#f0b8b4] bg-[#d5cfca]">
      <button className="flex h-6 w-[72px] items-center gap-[2px] border-2 border-t-white border-r-[#55524c] border-b-[#55524c] border-l-0 font-bold">
        <Svg className="h-[14px] w-[10px]" box="0 0 10 14">
          <path d="M0 2q3-2 4 0v5q-2-1-4 0z" fill="#e06a3c" />
          <path d="M5 2q3 2 5 0v5q-3 1-5 0z" fill="#7cba48" />
          <path d="M0 8q3-1 4 0v5q-2-2-4 0z" fill="#5a8ad8" />
          <path d="M5 8q3 1 5 0v5q-3 2-5 0z" fill="#f2c43c" />
        </Svg>
        Démarrer
      </button>
      <button aria-label="Capture" className="ml-2 flex h-6 w-8 items-center justify-center border-2 border-t-white border-r-[#55524c] border-b-[#55524c] border-l-white">
        <Svg>
          <circle cx="7" cy="6" r="5" fill="#fff" stroke="#c86a60" />
          <path d="M5 2l6 11M13 4l-7 7" stroke="#667" />
          <circle cx="12" cy="13" r="2" stroke="#334" />
          <circle cx="6" cy="12" r="1.500" stroke="#334" />
        </Svg>
      </button>
      <button aria-label="Network" className="flex h-6 items-center px-[10px]">
        <Svg>
          <circle cx="8" cy="8" r="7" fill="#4a8f9a" stroke="#12343c" />
          <path d="M3 8q5-8 10 0M3 8q5 8 10 0M8 1v14M1 8h14" stroke="#c5eef2" />
        </Svg>
      </button>
      <TaskButton icon={<RadioIcon />} label="HamRadioDeluxe - [IC-7..." />
      <button aria-label="Player" className="flex h-6 items-center px-[10px]">
        <Svg>
          <rect x="1" y="1" width="14" height="14" fill="#bcd7ee" stroke="#6d93b8" />
          <circle cx="8" cy="8" r="5" fill="#f09a2c" />
          <path d="M6 5l5 3-5 3z" fill="#fff" />
        </Svg>
      </button>
      <TaskButton icon={<BookIcon />} label="HRD Logbook - [My Logb..." />
      <span className="w-[2px]" />
      <TaskButton
        active
        icon={
          <Svg>
            <rect width="16" height="16" fill="#0d2a14" />
            <path d="M1 10l3-4 2 5 3-6 2 4 4-1" stroke="#5fd86c" />
          </Svg>
        }
        label="Digital Master 780 - [..."
      />
      <div className="ml-auto flex h-6 items-center">
        <span>Bureau</span>
        <span className="px-2 text-[15px] leading-4">»</span>
      </div>
      <div className="flex h-6 items-center gap-[9px] border-t border-l border-[#8f8a84] pr-1 pl-1">
        <ChevronsUp className="h-[11px] w-[11px]" strokeWidth={3} />
        <Svg>
          <path d="M3 1v14" stroke="#555" strokeWidth="1.500" />
          <path d="M4 2h6l1 2h4l-2 4-4-1H4z" fill="#fff" stroke="#666" />
        </Svg>
        <Svg>
          <path d="M1 3h5v8H1zM6 5h8v7H6z" fill="#e6e6e6" stroke="#555" />
          <path d="M7 8h9v8H7z" fill="#c5161c" />
          <path d="M9 10l5 4M14 10l-5 4" stroke="#fff" />
        </Svg>
        <Svg>
          <path d="M2 6h3l4-4v12l-4-4H2z" fill="#f4f4f4" stroke="#888" />
          <path d="M11 5q2 3 0 6M13 3q3 5 0 10" stroke="#888" />
        </Svg>
        <span className="pl-2">22:30</span>
        <Svg>
          <rect x="0.500" y="1.500" width="15" height="11" fill="#2c68c8" stroke="#1a3560" />
          <path d="M4 15h9" stroke="#333" strokeWidth="2" />
        </Svg>
      </div>
    </div>
  );
}

function Annotation() {
  return (
    <>
      <p className="pointer-events-none absolute top-[620px] left-[824px] font-['Liberation_Sans',sans-serif] text-[24px] leading-[30px] font-bold whitespace-nowrap text-[#1010ac]">
        Porteuse du signal de Jupiter sur 20,100Mhz
      </p>
      <svg
        className="pointer-events-none absolute top-[644px] left-[578px] h-[242px] w-[245px]"
        viewBox="0 0 245 242"
        aria-hidden="true"
      >
        <path d="M243 2L9 235" stroke="#1010ac" strokeWidth="2.500" />
        <path d="M3 241l5-14 9 9z" fill="#1010ff" stroke="#1010c8" />
      </svg>
    </>
  );
}

export default function App() {
  return (
    <div className="relative flex h-screen flex-col overflow-hidden border border-[#9c2038] bg-[#bcd3f7] font-['DejaVu_Sans_Condensed','DejaVu_Sans',sans-serif] text-[11px] whitespace-nowrap text-[#0b1230]">
      <TitleBar />
      <TopToolbar />
      <div className="flex min-h-0 flex-1">
        <div className="flex min-w-0 flex-1 flex-col">
          <DocTabs />
          <div className="flex min-h-0 flex-1 gap-[7px] pr-[2px]">
            <LogEntryDock />
            <MacroDock />
            <Terminal />
          </div>
          <div className="flex h-[7px] shrink-0 items-center justify-center">
            <span className="h-1 w-16 border-y border-dotted border-[#7f95c0]" />
          </div>
          <Waterfall />
          <StatusBar />
        </div>
        <SideMenu />
      </div>
      <Taskbar />
      <Annotation />
    </div>
  );
}
